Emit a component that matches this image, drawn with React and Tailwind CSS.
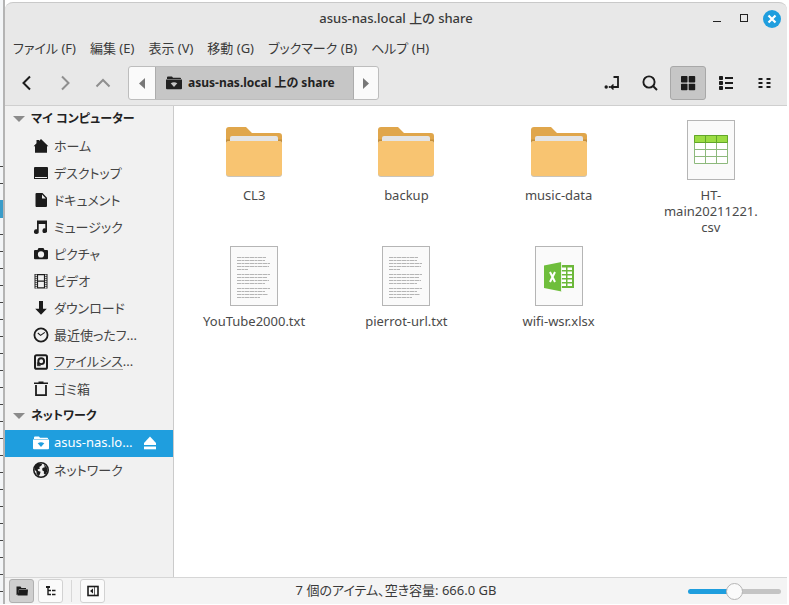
import React, { useState } from "react";

function FolderNet({ className = "", hole = "#e8e8e8" }) {
  return (
    <svg viewBox="0 0 16 16" className={`h-4 w-4 shrink-0 ${className}`} fill="currentColor" aria-hidden="true">
      <path d="M1 2.500Q1 1.500 2 1.500H6L7 2.800H14.200Q15 2.800 15 3.600V4H1Z" />
      <path d="M0 4.600H16V13.200Q16 14.300 15 14.300H1Q0 14.300 0 13.200Z" />
      <path d="M4.700 8.300Q8 6.300 11.300 8.300L8 12Z" fill={hole} />
    </svg>
  );
}

const icon = "h-4 w-4 shrink-0";

const HomeIcon = () => (
  <svg viewBox="0 0 16 16" className={icon} fill="currentColor" aria-hidden="true">
    <path d="M8 1 15.400 8.200H14V14.800H2V8.200H.6L3.500 5.300V2H6V3Z" />
  </svg>
);
const DesktopIcon = () => (
  <svg viewBox="0 0 16 16" className={icon} fill="currentColor" aria-hidden="true">
    <path fillRule="evenodd" d="M2 2H14Q15 2 15 3V14H1V3Q1 2 2 2ZM2 12V13H14V12Z" />
  </svg>
);
const DocumentIcon = () => (
  <svg viewBox="0 0 16 16" className={icon} fill="currentColor" aria-hidden="true">
    <path fillRule="evenodd" d="M3.500 1H9.500L14 5.800V14Q14 15 13 15H3.500Q2.500 15 2.500 14V2Q2.500 1 3.500 1ZM9 2.500V6.500H12.800Z" />
  </svg>
);
const MusicIcon = () => (
  <svg viewBox="0 0 16 16" className={icon} fill="currentColor" aria-hidden="true">
    <path d="M4 1.500H14V11.200A2.300 2.300 0 1 1 12.300 9.400V5H5.700V12.200A2.400 2.400 0 1 1 4 10.300Z" />
  </svg>
);
const CameraIcon = () => (
  <svg viewBox="0 0 16 16" className={icon} fill="currentColor" aria-hidden="true">
    <path fillRule="evenodd" d="M5.500 2H10.500L11.500 4H14Q15 4 15 5V12.300Q15 13.300 14 13.300H2Q1 13.300 1 12.300V5Q1 4 2 4H4.500ZM8 5.300A3.100 3.100 0 1 0 8 11.500A3.100 3.100 0 1 0 8 5.300Z" />
  </svg>
);
const VideoIcon = () => (
  <svg viewBox="0 0 16 16" className={icon} fill="none" stroke="currentColor" aria-hidden="true">
    <path d="M2 1V15.500M14 1V15.500" strokeWidth="1" />
    <path d="M3 1V15.500M13 1V15.500" strokeWidth="1.200" strokeDasharray="1 1" />
    <path d="M4.500 1V15.500M11.500 1V15.500M4.500 8.200H11.500M4 1.600H12M4 14.900H12" strokeWidth="1.200" />
  </svg>
);
const DownloadIcon = () => (
  <svg viewBox="0 0 16 16" className={icon} fill="currentColor" aria-hidden="true">
    <path d="M6 1H10V8.800H13.800L8 14.800 2.200 8.800H6Z" />
  </svg>
);
const RecentIcon = () => (
  <svg viewBox="0 0 16 16" className={icon} fill="none" stroke="currentColor" aria-hidden="true">
    <circle cx="8" cy="8" r="6.600" strokeWidth="1.800" />
    <path d="M4.800 6 7.600 8.400 11.800 5.400" strokeWidth="1.100" />
  </svg>
);
const DiskIcon = () => (
  <svg viewBox="0 0 16 16" className={icon} fill="none" stroke="currentColor" aria-hidden="true">
    <rect x="2" y="1.200" width="12" height="13.600" rx="1.600" strokeWidth="2" />
    <circle cx="8.200" cy="7.200" r="2.900" strokeWidth="1.900" />
    <path d="M4.400 8.500V11.800H7.500Z" fill="currentColor" strokeWidth=".6" />
  </svg>
);
const TrashIcon = () => (
  <svg viewBox="0 0 16 16" className={icon} fill="none" stroke="currentColor" aria-hidden="true">
    <path d="M1 2.300H15M5.500 1.300H10.500" strokeWidth="1.500" />
    <path d="M3 4V14.200H13V4" strokeWidth="1.800" />
  </svg>
);
const GlobeIcon = () => (
  <svg viewBox="0 0 16 16" className={icon} aria-hidden="true">
    <circle cx="8" cy="8" r="7.200" fill="none" stroke="currentColor" strokeWidth="1.600" />
    <path d="M2 3.600 5 1.200 9.300 1.800 8.300 3.800 6.200 5 7 6.400 4.600 7.600 5.200 9 7.600 9.800 7 12 5.800 14.300 3.600 12 3.400 9.600 1.400 7.600Z" fill="currentColor" />
    <path d="M10.800 2.300 14.500 6.200 14.200 9.800 12.200 12.800 10.800 11.600 11 9.400 9.200 8.200 9.400 6 11.800 5.200Z" fill="currentColor" />
  </svg>
);
const EjectIcon = () => (
  <svg viewBox="0 0 14 14" className="h-[14px] w-[14px]" fill="currentColor" aria-hidden="true">
    <path d="M7 .5 13 7V9H1V7Z" />
    <path d="M1 10.500H13V13.300H1Z" />
  </svg>
);

const places = [
  ["ホーム", HomeIcon],
  ["デスクトップ", DesktopIcon],
  ["ドキュメント", DocumentIcon],
  ["ミュージック", MusicIcon],
  ["ピクチャ", CameraIcon],
  ["ビデオ", VideoIcon],
  ["ダウンロード", DownloadIcon],
  ["最近使ったフ...", RecentIcon],
  ["ファイルシス...", DiskIcon, true],
  ["ゴミ箱", TrashIcon],
];

function SidebarHeading({ children }) {
  return (
    <h2 className="flex h-[27px] items-center gap-[6px] pb-[2px] pl-2 text-xs font-bold text-[#222]">
      <svg viewBox="0 0 12 6" className="h-[6px] w-3" fill="#8b8b8b" aria-hidden="true">
        <path d="M0 0H12L6 6Z" />
      </svg>
      {children}
    </h2>
  );
}

function Place({ label, Icon, usage }) {
  return (
    <li>
      <a href="#" className="flex h-[27px] items-center gap-[5px] pb-[2px] pl-7 text-[#1c1c1c]">
        <Icon />
        <span className="text-[#444]">
          <span className="block leading-4">{label}</span>
          {usage && (
            <span className="flex h-px w-[69px] bg-[#a5a5a5]">
              <span className="w-[2px] bg-[#1f9ede]" />
            </span>
          )}
        </span>
      </a>
    </li>
  );
}

function Folder() {
  return (
    <svg viewBox="0 -2 64 64" className="h-16 w-16" aria-hidden="true">
      <path d="M4 10Q4 7 7 7H24L30 13H57Q60 13 60 16V30H4Z" fill="#e0a64b" />
      <path d="M4 19.500H60V24H4Z" fill="#c48f3c" />
      <path d="M8 23V18Q8 16 10 16H54Q56 16 56 18V23Z" fill="#e4e4e4" />
      <path d="M4 24Q4 21 7 21H57Q60 21 60 24V54Q60 57 57 57H7Q4 57 4 54Z" fill="#c9c4ba" />
      <path d="M4 24Q4 21 7 21H57Q60 21 60 24V53Q60 56 57 56H7Q4 56 4 53Z" fill="#f8c471" />
    </svg>
  );
}

function Page({ children }) {
  return (
    <svg viewBox="0 0 64 64" className="h-16 w-16" aria-hidden="true">
      <rect x="8.500" y="2.500" width="47" height="59" fill="#fafafa" stroke="#b5b5b5" />
      {children}
    </svg>
  );
}

const textLines = [
  [13.5, 29], [16.5, 28], [19.5, 33], [22.5, 32], [25.5, 11],
  [30.5, 33], [33.5, 30], [36.5, 32], [39.5, 28],
  [44.5, 33], [47.5, 28], [50.5, 31], [53.5, 23],
];

function TextFile() {
  return (
    <Page>
      {textLines.map(([y, w]) => (
        <path key={y} d={`M15 ${y}h${w}`} stroke="#adadad" strokeWidth="0.9" strokeDasharray="4 .5 2.500 .5 5 .5" />
      ))}
    </Page>
  );
}

function CsvFile() {
  return (
    <Page>
      <rect x="15" y="17" width="34" height="28" fill="#fff" />
      <rect x="15" y="17" width="34" height="8" fill="#9bdc43" />
      <path d="M15.500 25V45.500H48.500V25M15 31.500H49M15 38.500H49M26.500 25V45M37.500 25V45" fill="none" stroke="#8db97c" />
      <path d="M15.500 17.500H48.500V24.500H15.500ZM26.500 17V25M37.500 17V25" fill="none" stroke="#62a62a" />
    </Page>
  );
}

function XlsxFile() {
  return (
    <Page>
      <rect x="32" y="21" width="15" height="23" fill="#6cb83a" />
      <path d="M34 23.500H39V26H34ZM40.500 23.500H45V26H40.500ZM34 27.500H39V30H34ZM40.500 27.500H45V30H40.500ZM34 31.500H39V34H34ZM40.500 31.500H45V34H40.500ZM34 35.500H39V38H34ZM40.500 35.500H45V38H40.500ZM34 39.500H39V42H34ZM40.500 39.500H45V42H40.500Z" fill="#fff" />
      <path d="M17 21.500 34.500 18V47.500L17 44Z" fill="#6fbe3c" />
      <path d="M34.500 18V47.500" stroke="#fafafa" strokeWidth=".8" />
      <path d="M23 28 28 38M28 28 23 38" stroke="#fff" strokeWidth="2" />
    </Page>
  );
}

const files = [
  ["CL3", Folder],
  ["backup", Folder],
  ["music-data", Folder],
  ["HT-\nmain20211221.\ncsv", CsvFile],
  ["YouTube2000.txt", TextFile],
  ["pierrot-url.txt", TextFile],
  ["wifi-wsr.xlsx", XlsxFile],
];

const menus = ["ファイル (F)", "編集 (E)", "表示 (V)", "移動 (G)", "ブックマーク (B)", "ヘルプ (H)"];

function ToolButton({ label, active, children }) {
  return (
    <button
      type="button"
      aria-label={label}
      aria-pressed={active}
      className={`flex h-[34px] w-9 items-center justify-center rounded-[3px] text-[#1c1c1c] ${
        active ? "border border-[#a8a8a8] bg-[#c6c6c6]" : ""
      }`}
    >
      {children}
    </button>
  );
}

function Chevron({ d, color }) {
  return (
    <svg viewBox="0 0 16 16" className="h-4 w-4" fill="none" stroke={color} strokeWidth="2" aria-hidden="true">
      <path d={d} />
    </svg>
  );
}

function StatusButton({ label, active, children }) {
  return (
    <button
      type="button"
      aria-label={label}
      className={`flex h-6 w-[25px] items-center justify-center rounded-[3px] border text-[#1c1c1c] ${
        active ? "border-[#b0b0b0] bg-[#cfcfcf]" : "border-[#d2d2d2] bg-[#fbfbfb]"
      }`}
    >
      {children}
    </button>
  );
}

function Backdrop() {
  return (
    <div className="flex w-[5px] shrink-0 flex-col border-r-2 border-[#b4b4b4] bg-[#f3f5f7]" aria-hidden="true">
      <div className="h-[166px] shrink-0" />
      <div className="h-[17px] shrink-0 border-t border-[#444]" />
      <div className="h-[17px] shrink-0 border-t border-[#444]" />
      <div className="h-[18px] shrink-0 bg-[#3a9cc9]" />
      <div className="h-4 shrink-0" />
      {Array.from({ length: 22 }, (_, i) => (
        <div key={i} className="h-[17px] shrink-0 border-t border-[#444]" />
      ))}
    </div>
  );
}

export default function App() {
  const [zoom, setZoom] = useState(50);
  return (
    <div className="flex h-screen overflow-hidden bg-white pb-px font-['Noto_Sans','Noto_Sans_CJK_JP',sans-serif] text-[13px] text-[#3a3a3a] [font-feature-settings:'palt']">
      <Backdrop />
      <main className="mt-[2px] mr-[2px] flex min-w-0 flex-1 flex-col overflow-hidden rounded-t-lg border-t border-[#c9c9c9] bg-[#e8e8e8]">
        <header className="grid h-8 shrink-0 grid-cols-[1fr_auto_1fr] items-center">
          <h1 className="col-start-2 font-medium">asus-nas.local 上の share</h1>
          <div className="flex items-center justify-end gap-[9px] pr-[6px] text-[#222]">
            <button type="button" aria-label="最小化" className="flex h-[18px] w-[18px] items-center justify-center">
              <svg viewBox="0 0 18 18" className="h-[18px] w-[18px]" stroke="currentColor" aria-hidden="true">
                <path d="M4 11.500H12" />
              </svg>
            </button>
            <button type="button" aria-label="最大化" className="flex h-[18px] w-[18px] items-center justify-center">
              <svg viewBox="0 0 18 18" className="h-[18px] w-[18px]" fill="none" stroke="currentColor" aria-hidden="true">
                <rect x="4.500" y="4.500" width="7" height="7" />
              </svg>
            </button>
            <button type="button" aria-label="閉じる" className="flex h-[18px] w-[18px] items-center justify-center rounded-full bg-[#1f9ede] text-white">
              <svg viewBox="0 0 18 18" className="h-[18px] w-[18px]" fill="none" stroke="currentColor" strokeWidth="2.200" aria-hidden="true">
                <path d="M5.500 5.500 12.500 12.500M12.500 5.500 5.500 12.500" />
              </svg>
            </button>
          </div>
        </header>

        <nav className="flex h-[27px] shrink-0 items-center gap-[14px] pl-2">
          {menus.map((m) => (
            <button key={m} type="button" className="whitespace-nowrap">
              {m}
            </button>
          ))}
        </nav>

        <div className="flex h-11 shrink-0 items-center border-b border-[#cfcfcf] pr-[5px] pb-px pl-1">
          <div className="flex gap-[2px]">
            <ToolButton label="戻る">
              <Chevron d="M11 1.500 4.500 8 11 14.500" color="#1c1c1c" />
            </ToolButton>
            <ToolButton label="進む">
              <Chevron d="M5 1.500 11.500 8 5 14.500" color="#8f8f8f" />
            </ToolButton>
            <ToolButton label="上へ">
              <Chevron d="M1.500 11.500 8 5 14.500 11.500" color="#8f8f8f" />
            </ToolButton>
          </div>
          <div className="ml-[7px] flex h-[34px] overflow-hidden rounded-[3px] border border-[#bdbdbd] bg-[#fafafa]">
            <button type="button" aria-label="前のフォルダー" className="flex w-[26px] items-center justify-center">
              <svg viewBox="0 0 6 11" className="h-[11px] w-[6px]" fill="#777" aria-hidden="true">
                <path d="M6 0V11L0 5.500Z" />
              </svg>
            </button>
            <button type="button" className="flex w-[199px] items-center gap-[6px] border-x border-[#acacac] bg-[#c6c6c6] px-[10px] text-xs font-bold whitespace-nowrap text-[#222]">
              <FolderNet hole="#c6c6c6" />
              asus-nas.local 上の share
            </button>
            <button type="button" aria-label="次のフォルダー" className="flex w-6 items-center justify-center">
              <svg viewBox="0 0 6 11" className="h-[11px] w-[6px]" fill="#777" aria-hidden="true">
                <path d="M0 0V11L6 5.500Z" />
              </svg>
            </button>
          </div>
          <div className="ml-auto flex gap-[2px]">
            <ToolButton label="場所の入力">
              <svg viewBox="0 0 16 16" className="h-4 w-4" fill="none" stroke="currentColor" strokeWidth="1.800" aria-hidden="true">
                <path d="M9.500 2H14V12H7.500" />
                <path d="M9.500 9.500 7 12 9.500 14.500" strokeWidth="1.500" />
                <circle cx="2.200" cy="12" r="1.700" fill="currentColor" stroke="none" />
                <circle cx="5.700" cy="12" r="1.100" fill="currentColor" stroke="none" />
              </svg>
            </ToolButton>
            <ToolButton label="検索">
              <svg viewBox="0 0 16 16" className="h-4 w-4" fill="none" stroke="currentColor" strokeWidth="1.900" aria-hidden="true">
                <circle cx="7" cy="7" r="5.600" />
                <path d="M11 11 15 15" />
              </svg>
            </ToolButton>
            <ToolButton label="アイコン表示" active>
              <svg viewBox="0 0 16 16" className="h-4 w-4" fill="currentColor" aria-hidden="true">
                <rect x="1" y="1" width="6.500" height="6.500" rx=".8" />
                <rect x="8.700" y="1" width="6.500" height="6.500" rx=".8" />
                <rect x="1" y="8.700" width="6.500" height="6.500" rx=".8" />
                <rect x="8.700" y="8.700" width="6.500" height="6.500" rx=".8" />
              </svg>
            </ToolButton>
            <ToolButton label="リスト表示">
              <svg viewBox="0 0 16 16" className="h-4 w-4" fill="currentColor" aria-hidden="true">
                <rect x="1" y="1" width="4" height="4" rx=".8" />
                <rect x="1" y="6" width="4" height="4" rx=".8" />
                <rect x="1" y="11" width="4" height="4" rx=".8" />
                <rect x="7" y="2" width="8" height="2" />
                <rect x="7" y="7" width="8" height="2" />
                <rect x="7" y="12" width="8" height="2" />
              </svg>
            </ToolButton>
            <ToolButton label="コンパクト表示">
              <svg viewBox="0 0 16 16" className="h-4 w-4" stroke="currentColor" strokeWidth="1.800" aria-hidden="true">
                <path d="M2.500 4H6.500M2.500 8H6.500M2.500 12H6.500M10.500 4H14.500M10.500 8H14.500M10.500 12H14.500" />
              </svg>
            </ToolButton>
          </div>
        </div>

        <div className="flex min-h-0 flex-1">
          <aside className="w-[169px] shrink-0 border-r border-[#cbcbcb] bg-[#f1f1f1]">
            <SidebarHeading>マイ コンピューター</SidebarHeading>
            <ul>
              {places.map(([label, Icon, usage]) => (
                <Place key={label} label={label} Icon={Icon} usage={usage} />
              ))}
            </ul>
            <SidebarHeading>ネットワーク</SidebarHeading>
            <ul>
              <li className="flex h-[27px] items-center bg-[#1f9ede] pr-4 pb-px pl-7 text-white">
                <a href="#" className="flex flex-1 items-center gap-[5px] whitespace-nowrap">
                  <FolderNet hole="#1f9ede" />
                  asus-nas.lo…
                </a>
                <button type="button" aria-label="取り出す">
                  <EjectIcon />
                </button>
              </li>
              <Place label="ネットワーク" Icon={GlobeIcon} />
            </ul>
          </aside>

          <section className="grid min-w-0 flex-1 grid-cols-4 content-start bg-white pt-3 pl-1">
            {files.map(([name, Icon]) => (
              <figure key={name} className="flex min-h-[126px] flex-col items-center gap-[5px] text-center">
                <Icon />
                <figcaption className="leading-4 whitespace-pre-line text-[#4a4a4a]">{name}</figcaption>
              </figure>
            ))}
          </section>
        </div>

        <footer className="grid h-[27px] shrink-0 grid-cols-[1fr_auto_1fr] items-center border-t border-[#d6d6d6] bg-[#f4f4f4] px-1">
          <div className="flex items-center gap-1">
            <StatusButton label="場所を表示" active>
              <svg viewBox="0 0 12 12" className="h-3 w-3" fill="currentColor" aria-hidden="true">
                <path d="M.5 1.500H4.500L5.500 3H10V4H3L2 9.500.5 10Z" />
                <path d="M3 4.600H12L11.500 10.500H1.500Z" />
              </svg>
            </StatusButton>
            <StatusButton label="ツリーを表示">
              <svg viewBox="0 0 12 12" className="h-3 w-3" fill="none" stroke="currentColor" aria-hidden="true">
                <path d="M3 1V9.500H6M3 5.500H6M7 5.500H10.500M7 9.500H10.500" strokeWidth="1.400" />
                <path d="M1 2H5" strokeWidth="2" />
              </svg>
            </StatusButton>
            <span className="mx-1 h-[22px] w-px bg-[#d8d8d8]" />
            <StatusButton label="サイドバーを隠す">
              <svg viewBox="0 0 12 12" className="h-3 w-3" aria-hidden="true">
                <rect x="1" y="1.500" width="10" height="9" fill="none" stroke="currentColor" strokeWidth="1.600" />
                <path d="M6 3.500V8.500L3 6Z" fill="currentColor" />
                <path d="M7.500 2V10" stroke="currentColor" strokeWidth=".7" />
              </svg>
            </StatusButton>
          </div>
          <p>7 個のアイテム、空き容量: 666.0 GB</p>
          <input
            type="range"
            aria-label="ズーム"
            value={zoom}
            onChange={(e) => setZoom(Number(e.target.value))}
            style={{ "--fill": `${zoom}%` }}
            className="mr-[2px] h-[17px] w-[93px] appearance-none justify-self-end bg-transparent [&::-webkit-slider-runnable-track]:h-[5px] [&::-webkit-slider-runnable-track]:rounded-full [&::-webkit-slider-runnable-track]:bg-[linear-gradient(to_right,#1f9ede_var(--fill),#c4c4c4_var(--fill))] [&::-webkit-slider-thumb]:-mt-[6px] [&::-webkit-slider-thumb]:h-[17px] [&::-webkit-slider-thumb]:w-[17px] [&::-webkit-slider-thumb]:appearance-none [&::-webkit-slider-thumb]:rounded-full [&::-webkit-slider-thumb]:border [&::-webkit-slider-thumb]:border-[#b5b5b5] [&::-webkit-slider-thumb]:bg-[#fafafa]"
          />
        </footer>
      </main>
    </div>
  );
}
